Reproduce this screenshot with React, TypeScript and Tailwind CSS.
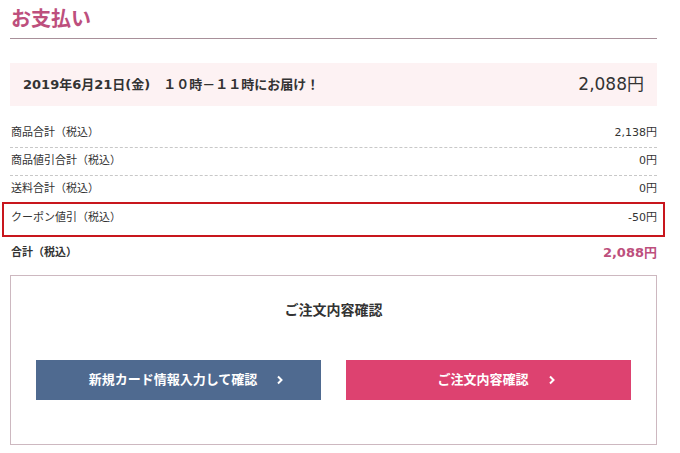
import React from "react";

const font = {
  fontFamily: '"DejaVu Sans", "Noto Sans CJK JP", sans-serif',
};

type Row = { label: string; value: string; coupon?: boolean };

const rows: Row[] = [
  { label: "商品合計（税込）", value: "2,138円" },
  { label: "商品値引合計（税込）", value: "0円" },
  { label: "送料合計（税込）", value: "0円" },
  { label: "クーポン値引（税込）", value: "-50円", coupon: true },
];

const Chevron = () => (
  <svg width="8" height="10" viewBox="0 0 8 10" className="ml-[19px]">
    <polyline
      points="2,1.5 5.5,5 2,8.5"
      fill="none"
      stroke="white"
      strokeWidth="2"
    />
  </svg>
);

const App = () => {
  return (
    <div className="w-[680px] h-[453px] bg-white overflow-hidden" style={font}>
      <div className="ml-[10px] w-[647px]">
        <div className="h-[39px] pt-[5px] border-b border-[#a8909a]">
          <h1 className="text-[20px] leading-[28px] font-bold text-[#bd4f7d] pl-[1px]">
            お支払い
          </h1>
        </div>

        <div className="mt-[24px] h-[43px] bg-[#fdf2f3] flex items-center justify-between pl-[13px] pr-[13px] text-[#333]">
          <p className="text-[13px] font-bold">
            2019年6月21日(金)　１０時－１１時にお届け！
          </p>
          <p className="text-[17px]">2,088円</p>
        </div>

        <div className="mt-[14px]">
          {rows.map((row) => (
            <div
              key={row.label}
              className={`relative h-[28px] flex items-center justify-between pl-[1px] text-[11px] text-[#333] ${
                row.coupon ? "" : "border-b border-dashed border-[#c8c8c8]"
              }`}
            >
              <span>{row.label}</span>
              <span>{row.value}</span>
              {row.coupon && (
                <div className="absolute -left-[8px] -right-[8px] -top-[2px] -bottom-[5px] border-2 border-[#c8161d]" />
              )}
            </div>
          ))}
          <div className="h-[42px] flex items-center justify-between pl-[1px] text-[#333]">
            <span className="text-[11px] font-bold">合計（税込）</span>
            <span className="text-[13px] font-bold text-[#bd4f7d]">2,088円</span>
          </div>
        </div>

        <div className="mt-[1px] h-[170px] border border-[#cdb8c0] px-[25px] pt-[23px]">
          <h2 className="text-center text-[14px] leading-[22px] font-bold text-[#333]">
            ご注文内容確認
          </h2>
          <div className="mt-[39px] flex gap-[25px]">
            <button className="flex-1 h-[40px] bg-[#4f6a90] text-white text-[13px] font-bold flex items-center justify-center pl-[16px]">
              新規カード情報入力して確認
              <Chevron />
            </button>
            <button className="flex-1 h-[40px] bg-[#dd4270] text-white text-[13px] font-bold flex items-center justify-center pl-[16px]">
              ご注文内容確認
              <Chevron />
            </button>
          </div>
        </div>
      </div>
    </div>
  );
};

export default App;
